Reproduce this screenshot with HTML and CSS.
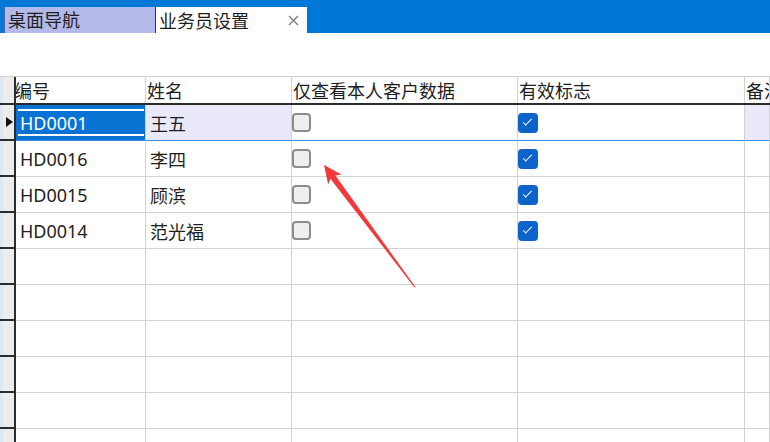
FILE: index.html
```html
<!DOCTYPE html>
<html lang="zh-CN">
<head>
    <meta charset="UTF-8">
    <title>业务员设置</title>
    <link rel="stylesheet" href="styles.css">
</head>
<body>
    <div class="tabbar">
        <div class="tab">桌面导航</div>
        <div class="tab active">
            业务员设置
            <svg class="close" width="11" height="11" viewBox="0 0 11 11">
                <path d="M1 1 L10 10 M10 1 L1 10" stroke="#7a7a7a" stroke-width="1.3"/>
            </svg>
        </div>
    </div>

    <div class="toolbar"></div>

    <div class="grid">
        <div class="row head">
            <div class="ind"></div>
            <div class="cell first">编号</div>
            <div class="cell">姓名</div>
            <div class="cell">仅查看本人客户数据</div>
            <div class="cell">有效标志</div>
            <div class="cell">备注</div>
        </div>

        <div class="row current">
            <div class="ind"><span class="pointer"></span></div>
            <div class="cell editing"><span class="editor">HD0001</span></div>
            <div class="cell text sel">王五</div>
            <div class="cell check"><span class="box"></span></div>
            <div class="cell check"><span class="box on"></span></div>
            <div class="cell sel"></div>
        </div>

        <div class="row">
            <div class="ind"></div>
            <div class="cell text">HD0016</div>
            <div class="cell text">李四</div>
            <div class="cell check"><span class="box"></span></div>
            <div class="cell check"><span class="box on"></span></div>
            <div class="cell"></div>
        </div>

        <div class="row">
            <div class="ind"></div>
            <div class="cell text">HD0015</div>
            <div class="cell text">顾滨</div>
            <div class="cell check"><span class="box"></span></div>
            <div class="cell check"><span class="box on"></span></div>
            <div class="cell"></div>
        </div>

        <div class="row">
            <div class="ind"></div>
            <div class="cell text">HD0014</div>
            <div class="cell text">范光福</div>
            <div class="cell check"><span class="box"></span></div>
            <div class="cell check"><span class="box on"></span></div>
            <div class="cell"></div>
        </div>

        <!-- empty rows -->
        <div class="row"><div class="ind"></div><div class="cell"></div><div class="cell"></div><div class="cell"></div><div class="cell"></div><div class="cell"></div></div>
        <div class="row"><div class="ind"></div><div class="cell"></div><div class="cell"></div><div class="cell"></div><div class="cell"></div><div class="cell"></div></div>
        <div class="row"><div class="ind"></div><div class="cell"></div><div class="cell"></div><div class="cell"></div><div class="cell"></div><div class="cell"></div></div>
        <div class="row"><div class="ind"></div><div class="cell"></div><div class="cell"></div><div class="cell"></div><div class="cell"></div><div class="cell"></div></div>
        <div class="row"><div class="ind"></div><div class="cell"></div><div class="cell"></div><div class="cell"></div><div class="cell"></div><div class="cell"></div></div>
        <div class="row"><div class="ind"></div><div class="cell"></div><div class="cell"></div><div class="cell"></div><div class="cell"></div><div class="cell"></div></div>
    </div>

    <!-- red annotation arrow drawn over the grid -->
    <svg class="arrow" width="770" height="442" viewBox="0 0 770 442">
        <polygon points="324,165 341.5,174.4 335.4,175.4 415.5,287 414.5,287.4 330.4,178.8 328.2,184.4" fill="#f03a3a"/>
    </svg>
</body>
</html>
```

FILE: styles.css
```css
body {
    margin: 0;
    width: 770px;
    height: 442px;
    overflow: hidden;
    position: relative;
    background: #fff;
    font-family: "Noto Sans", "Noto Sans CJK SC", sans-serif;
    font-size: 18px;
    color: #1e1e1e;
}

.tabbar {
    height: 33px;
    box-sizing: border-box;
    padding: 7px 0 0 4px;
    background: #0078d7;
    display: flex;
}

.tab {
    width: 151px;
    height: 26px;
    box-sizing: border-box;
    border-left: 1px solid #55629a;
    background: #b3b9e8;
    padding-left: 3px;
    line-height: 24px;
    font-family: "Noto Sans CJK SC", sans-serif;
    white-space: nowrap;
}

.tab.active {
    width: 152px;
    border-left: 1px solid #333;
    background: #fff;
    display: flex;
    align-items: center;
    line-height: 24px;
}

.close {
    margin-left: auto;
    margin-right: 8px;
}

.toolbar {
    height: 43px;
}

.grid {
    height: 366px;
    overflow: hidden;
    border-top: 1px solid #cfcfcf;
}

.row {
    display: grid;
    grid-template-columns: 16px 130px 146px 226px 227px 1fr;
    height: 36px;
}

.row.head {
    height: 28px;
    box-sizing: border-box;
    border-bottom: 2px solid #2b2b2b;
}

.ind {
    background: #ececec;
    box-shadow: inset 3px 0 #dde7f3;
    border-right: 2px solid #2b2b2b;
    border-bottom: 2px solid #2b2b2b;
    position: relative;
}

.head .ind {
    border-bottom: none;
}

.cell {
    box-sizing: border-box;
    border-right: 1px solid #d2d2d2;
    border-bottom: 1px solid #d2d2d2;
    display: flex;
    align-items: center;
    overflow: hidden;
    white-space: nowrap;
    font-family: "Noto Sans", "Noto Sans CJK SC", sans-serif;
}

.head .cell {
    border-bottom: none;
    padding-left: 1px;
    font-family: "Noto Sans CJK SC", sans-serif;
}

.head .cell.first {
    padding-left: 0;
    text-indent: -2px;
}

.text {
    padding-left: 4px;
}

.current .cell {
    border-bottom-color: #3b8de0;
}

.sel {
    background: #e9e9fa;
}

.editing {
    background: #0a72d2;
    padding: 4px 1px 4px 2px;
    align-items: stretch;
}

.editor {
    flex: 1;
    border-top: 2px solid #fff;
    border-bottom: 2px solid #fff;
    color: #fff;
    padding-left: 2px;
    display: flex;
    align-items: center;
}

.pointer {
    position: absolute;
    left: 6px;
    top: 12px;
    border-left: 7px solid #111;
    border-top: 5px solid transparent;
    border-bottom: 5px solid transparent;
}

.check {
    padding-left: 0;
}

.box {
    width: 19px;
    height: 19px;
    box-sizing: border-box;
    border: 2px solid #8c8c8c;
    border-radius: 4px;
    background: #efefef;
    position: relative;
}

.box.on {
    border: none;
    background: #0e63c8;
    width: 20px;
    height: 20px;
}

.box.on::after {
    content: "";
    position: absolute;
    left: 5px;
    top: 6px;
    width: 8px;
    height: 3px;
    border-left: 1.3px solid #fff;
    border-bottom: 1.3px solid #fff;
    transform: rotate(-45deg);
}

.arrow {
    position: absolute;
    left: 0;
    top: 0;
    pointer-events: none;
}
```
